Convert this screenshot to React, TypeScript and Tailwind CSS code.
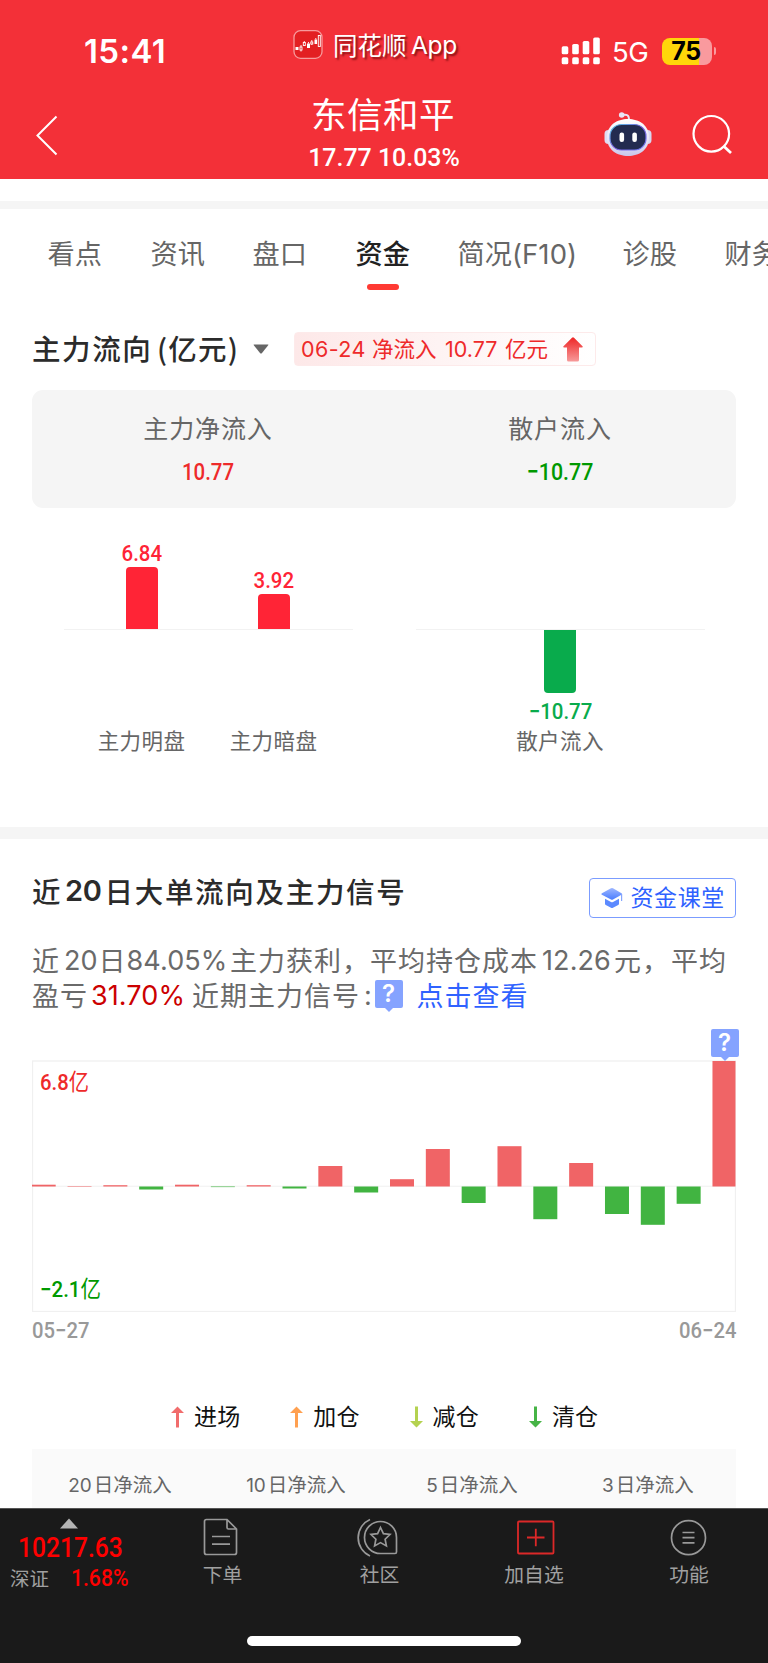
import React from "react";

const CJK = "font-['Noto_Sans_CJK_SC',sans-serif]";
const LATIN = "font-['Inter','Noto_Sans_CJK_SC',sans-serif]";
const DIN = "font-['Roboto','Noto_Sans_CJK_SC',sans-serif] font-medium";

const tabs = [
  { label: "看点", width: "w-[103px]" },
  { label: "资讯", width: "w-[102px]" },
  { label: "盘口", width: "w-[103px]" },
  { label: "资金", width: "w-[102px]", active: true },
  { label: "简况", suffix: "(F10)", width: "w-[165px]" },
  { label: "诊股", width: "w-[102px]" },
  { label: "财务", width: "w-[60px]" },
];

/* Signed bar heights in pixels, oldest day first. */
const dailyFlow = [
  1.8, 0.5, 1.3, -3, 1.8, -0.6, 1.3, -2, 20.5, -6, 7.3, 37.5, -16.5, 40.3, -32.7, 23.5, -27.5, -38.3, -17.3, 125.5,
];

const legend = [
  { label: "进场", color: "#f16c6c", up: true },
  { label: "加仓", color: "#ffa050", up: true },
  { label: "减仓", color: "#b4d250", up: false },
  { label: "清仓", color: "#46b446", up: false },
];

function StatusBar() {
  return (
    <div className="flex h-[84px] pl-[84px]">
      <div className={`${LATIN} mt-[35px] w-[209px] shrink-0 text-[33px] leading-[33px] font-semibold tracking-[0.4px]`}>15:41</div>
      <svg className="mt-[30px] h-[29px] w-[30px] shrink-0" viewBox="0 0 30 29">
        <rect x="1" y="0.7" width="28" height="27.6" rx="6.5" fill="#e31f22" stroke="#f79a9c" strokeWidth="1.3" />
        <g fill="#fff">
          <rect x="2.5" y="17" width="3" height="3" />
          <rect x="14" y="13.5" width="3" height="4.5" />
          <rect x="21.5" y="9.5" width="2.6" height="4.5" />
        </g>
        <g fill="none" stroke="#fff" strokeWidth="0.9">
          <rect x="7" y="17" width="2" height="3" />
          <path d="M8 15v2M8 20v1.5M11.3 11v1.5M15.5 12v1.5M18.8 10v2M18.8 15v-1M22.8 8v1.5" />
          <rect x="10.3" y="12.5" width="2" height="3" />
          <rect x="17.8" y="12" width="2" height="2" />
          <rect x="25.3" y="5.5" width="2" height="11" />
        </g>
      </svg>
      <div className="mt-[31.5px] ml-[10px] flex w-[228px] shrink-0 whitespace-nowrap text-[24.5px] leading-[26px] [text-shadow:2px_2px_2px_rgba(80,0,0,0.65)]">
        <span className={`${CJK} w-[78px]`}>同花顺</span>
        <span className={`${LATIN} tracking-[-0.3px]`}>App</span>
      </div>
      <svg className="mt-[37px] h-[28px] w-[40px] shrink-0" viewBox="0 0 40 28" fill="#fff">
        <rect x="0.7" y="9.3" width="6.6" height="8" rx="1.6" />
        <rect x="11.2" y="7" width="6.6" height="10.3" rx="1.6" />
        <rect x="21.7" y="4" width="6.6" height="13.3" rx="1.6" />
        <rect x="32.2" y="0.5" width="6.6" height="16.8" rx="1.6" />
        <rect x="0.7" y="20.3" width="6.6" height="7" rx="1.6" />
        <rect x="11.2" y="20.3" width="6.6" height="7" rx="1.6" />
        <rect x="21.7" y="20.3" width="6.6" height="7" rx="1.6" />
        <rect x="32.2" y="20.3" width="6.6" height="7" rx="1.6" />
      </svg>
      <div className={`${LATIN} mt-[38px] ml-[11px] w-[50px] shrink-0 text-[27.5px] leading-[28px] tracking-[-0.4px]`}>5G</div>
      <div className="mt-[37px] flex h-[28px] items-center">
        <div className="flex h-[27px] w-[50px] items-center overflow-hidden rounded-[8px] bg-[linear-gradient(90deg,#ffd60a_74%,#f99a9e_74%)]">
          <span className={`${LATIN} w-[48px] text-center text-[25px] leading-[27px] font-bold tracking-[-0.5px] text-black`}>75</span>
        </div>
        <div className="ml-[1.5px] h-[8px] w-[2.5px] rounded-r-full bg-[#f99a9e]" />
      </div>
    </div>
  );
}

function Robot() {
  return (
    <svg className="h-[46px] w-[50px]" viewBox="0 0 50 46">
      <defs>
        <linearGradient id="head" x1="0" y1="0" x2="0" y2="1">
          <stop offset="0" stopColor="#ffffff" />
          <stop offset="0.6" stopColor="#e6e2f6" />
          <stop offset="1" stopColor="#c9c6ea" />
        </linearGradient>
        <linearGradient id="visor" x1="0" y1="0" x2="1" y2="1">
          <stop offset="0" stopColor="#58d0e8" />
          <stop offset="0.5" stopColor="#7a5fe0" />
          <stop offset="1" stopColor="#6f7df0" />
        </linearGradient>
      </defs>
      <path d="M19 4c5-1 7 0 7 5" fill="none" stroke="#e8e4f4" strokeWidth="2" />
      <circle cx="18.7" cy="4" r="2.8" fill="#e9e4f5" />
      <rect x="1.500" y="19" width="8" height="14" rx="4" fill="#dfdcf2" />
      <rect x="40.500" y="19" width="8" height="14" rx="4" fill="#d9d7f0" />
      <path d="M25 8C36 8 46 14 46 26.500S36 45 25 45 4 39 4 26.500 14 8 25 8z" fill="url(#head)" />
      <rect x="7" y="13.500" width="36" height="25.500" rx="11.500" fill="#232b50" stroke="url(#visor)" strokeWidth="1.200" />
      <rect x="16.500" y="21.500" width="4.600" height="9.500" rx="2.200" fill="#fff" />
      <rect x="29.300" y="21.500" width="4.600" height="9.500" rx="2.200" fill="#fff" />
    </svg>
  );
}

function TitleBar() {
  return (
    <div className="flex h-[95px] pl-[36px]">
      <svg className="mt-[31px] h-[41px] w-[22px] shrink-0" viewBox="0 0 22 41" fill="none" stroke="#fff" strokeWidth="2">
        <path d="M20.500 1.500L1.500 20.500l19 19" />
      </svg>
      <div className="ml-[225px] w-[200px] text-center">
        <div className={`${CJK} mt-[10px] h-[38px] whitespace-nowrap text-[35.500px] leading-[38px] font-normal tracking-[0.500px]`}>东信和平</div>
        <div className={`${DIN} mt-[11px] ml-[2px] origin-center scale-x-[0.94] whitespace-nowrap text-[26.500px] leading-[28px]`}>17.77 10.03%</div>
      </div>
      <div className="mt-[27px] ml-[120px] flex w-[165px]">
        <Robot />
        <svg className="mt-[3px] ml-[39px] h-[41px] w-[41px]" viewBox="0 0 41 41" fill="none" stroke="#fff" strokeWidth="2.200">
          <circle cx="19.300" cy="19.800" r="17.800" />
          <path d="M31.500 32l7.500 7" strokeWidth="2.800" />
        </svg>
      </div>
    </div>
  );
}

function Tabs() {
  return (
    <nav className="flex h-[97px] shrink-0 overflow-hidden pt-[25px] pl-[47.500px]">
      {tabs.map((t) => (
        <div key={t.label} className={`${t.width} shrink-0 whitespace-nowrap`}>
          <div
            className={
              t.active
                ? `${CJK} h-[36px] text-[27.200px] leading-[36px] font-medium text-[#222]`
                : `${CJK} h-[36px] text-[27.200px] leading-[36px] font-normal text-[#666]`
            }
          >
            {t.label}
            {t.suffix && <span className={`${LATIN} text-[27.500px] tracking-[0.100px]`}>{t.suffix}</span>}
          </div>
          {t.active && <div className="mt-[13.500px] ml-[11px] h-[6.500px] w-[32px] rounded-full bg-[#ff3a33]" />}
        </div>
      ))}
    </nav>
  );
}

function FlowHeading() {
  return (
    <div className="flex h-[84px] shrink-0 items-center px-[32px]">
      <h2 className={`${CJK} flex h-[36px] w-[221px] whitespace-nowrap text-[28.500px] leading-[36px] font-medium tracking-[1.600px] text-[#2b2b2b]`}>
        <span className="w-[125px]">主力流向</span>
        <span className="tracking-[1.200px]">(亿元)</span>
      </h2>
      <svg className="mt-[2px] h-[10px] w-[16px]" viewBox="0 0 16 10" fill="#666">
        <path d="M1 .5h14q.8 0 .2.8L9 9q-1 1-2 0L.8 1.300Q.2.500 1 .5z" />
      </svg>
      <div className="mt-[2px] ml-[25px] flex h-[34px] w-[302px] items-center rounded-[4px] border border-[#fdeaea] bg-[linear-gradient(90deg,#fde8e8_0%,#fff_100%)] pl-[6px] text-[21.500px] leading-[24px] whitespace-nowrap text-[#ee2a2a]">
        <span className={`${LATIN} w-[71px] tracking-[0.400px]`}>06-24</span>
        <span className={`${CJK} relative top-[-1px] w-[73px]`}>净流入</span>
        <span className={`${LATIN} w-[60px]`}>10.77</span>
        <span className={`${CJK} relative top-[-1px] w-[58px]`}>亿元</span>
        <svg className="h-[25px] w-[20px]" viewBox="0 0 20 25">
          <defs>
            <linearGradient id="rise" x1="0" y1="0" x2="0" y2="1">
              <stop offset="0" stopColor="#ee2525" />
              <stop offset="1" stopColor="#f79a9a" />
            </linearGradient>
          </defs>
          <path d="M9 .7q1-.8 2 0l8.500 8.600q.7 1-.5 1.200H16V23q0 1.500-1.500 1.500h-9Q4 24.500 4 23V10.500H1Q-.2 10.300.5 9.300z" fill="url(#rise)" />
        </svg>
      </div>
    </div>
  );
}

function SummaryCard() {
  const label = `${CJK} mt-[20px] text-[25px] leading-[34px] font-normal tracking-[0.900px] text-[#666]`;
  return (
    <div className="mx-8 grid h-[118px] shrink-0 grid-cols-2 rounded-[11px] bg-[#f5f5f5] text-center whitespace-nowrap">
      <div>
        <div className={label}>主力净流入</div>
        <div className={`${DIN} mt-[14px] scale-x-[0.84] text-[24.300px] leading-[28px] text-[#ee2a2a]`}>10.77</div>
      </div>
      <div>
        <div className={label}>散户流入</div>
        <div className={`${DIN} mt-[14px] scale-x-[0.88] text-[24.300px] leading-[28px] text-[#009900]`}>−10.77</div>
      </div>
    </div>
  );
}

function SplitBars() {
  const label = `${CJK} text-[21.500px] leading-[30px] font-normal tracking-[0.400px] text-[#666]`;
  const value = `${DIN} scale-x-[0.93] text-[22px] leading-[22px]`;
  return (
    <div className="flex h-[319px] shrink-0 justify-between px-[63.500px] text-center whitespace-nowrap">
      <div className="w-[289px]">
        <div className="flex h-[122px] items-end justify-center gap-[32px] border-b-[1.500px] border-[#f2f2f2]">
          <div className="flex w-[100px] flex-col items-center text-[#ff2436]">
            <span className={value}>6.84</span>
            <div className="mt-[2px] h-[62.500px] w-[32px] rounded-t-[4px] bg-[#ff2436]" />
          </div>
          <div className="flex w-[100px] flex-col items-center text-[#ff2436]">
            <span className={value}>3.92</span>
            <div className="mt-[2px] h-[35.500px] w-[32px] rounded-t-[4px] bg-[#ff2436]" />
          </div>
        </div>
        <div className="mt-[95px] flex justify-center gap-[32px]">
          <span className={`${label} w-[99px]`}>主力明盘</span>
          <span className={`${label} w-[101px]`}>主力暗盘</span>
        </div>
      </div>
      <div className="w-[289px]">
        <div className="h-[122px] border-b-[1.500px] border-[#f2f2f2]" />
        <div className="mx-auto h-[63px] w-[32px] rounded-b-[4px] bg-[#09ab4c]" />
        <div className={`${value} mt-[8px] text-[#09ab4c]`}>−10.77</div>
        <div className={`${label} mt-[2px]`}>散户流入</div>
      </div>
    </div>
  );
}

function QuestionMark() {
  return (
    <div className="h-[31px] w-[28px]">
      <div className={`${LATIN} flex h-[28px] items-center justify-center rounded-[2px] bg-[#85a3ff] text-[24px] leading-[28px] font-semibold text-white`}>?</div>
      <svg className="mx-auto h-[4px] w-[8px]" viewBox="0 0 8 4" fill="#85a3ff">
        <path d="M0 0h8L4 4z" />
      </svg>
    </div>
  );
}

function SignalHeading() {
  return (
    <div className="flex h-[79px] shrink-0 items-start justify-between px-8">
      <h2 className={`${CJK} mt-[34px] flex whitespace-nowrap text-[28.500px] leading-[36px] font-medium tracking-[1.700px] text-[#2b2b2b]`}>
        <span className="w-[33px]">近</span>
        <span className={`${LATIN} w-[39.500px] text-[29px] font-semibold tracking-[-0.200px]`}>20</span>
        <span>日大单流向及主力信号</span>
      </h2>
      <div className="mt-[38.500px] flex h-[40px] w-[147.500px] items-center rounded-[4px] border-[1.500px] border-[#7b9cff] pl-[11px]">
        <svg className="h-[22px] w-[22px]" viewBox="0 0 22 22">
          <defs>
            <linearGradient id="cap" x1="0" y1="0" x2="0" y2="1">
              <stop offset="0" stopColor="#9db6ff" />
              <stop offset="1" stopColor="#4a7dff" />
            </linearGradient>
          </defs>
          <path d="M10 1.300q1-.5 2 0l8.500 4.900q1.100.8 0 1.600L12 12.500q-1 .5-2 0L.9 7.800q-1-.8 0-1.600z" fill="url(#cap)" />
          <path d="M4 11.700l6 3.200q1 .5 2 0l6-3.200v5q0 .8-.8 1.300L12 20.700q-1 .5-2 0L4.800 18q-.8-.5-.8-1.300z" fill="#5c8aff" />
          <path d="M20.600 7v7" stroke="#86a6ff" strokeWidth="1.200" />
        </svg>
        <span className={`${CJK} mt-[-3px] ml-[8px] text-[23px] leading-[30px] whitespace-nowrap tracking-[0.600px] text-[#2f62ff]`}>资金课堂</span>
      </div>
    </div>
  );
}

function Summary() {
  const cn = `${CJK} mt-[-2px] text-[27px] font-normal tracking-[1px]`;
  const num = `${LATIN} text-[27px] tracking-[0.100px]`;
  return (
    <div className="h-[142px] shrink-0 pt-[25px] pl-8 whitespace-nowrap text-[#6a6a6a]">
      <div className="flex h-[35px] items-center leading-[35px]">
        <span className={`${cn} w-[32px]`}>近</span>
        <span className={`${num} w-[34.500px]`}>20</span>
        <span className={`${cn} w-[28px]`}>日</span>
        <span className={`${num} w-[103.500px]`}>84.05%</span>
        <span className={`${cn} w-[140px]`}>主力获利，</span>
        <span className={`${cn} w-[172px]`}>平均持仓成本</span>
        <span className={`${num} w-[72px]`}>12.26</span>
        <span className={`${cn} w-[57px]`}>元，</span>
        <span className={cn}>平均</span>
      </div>
      <div className="flex h-[35px] items-center leading-[35px]">
        <span className={`${cn} w-[59px]`}>盈亏</span>
        <span className={`${num} w-[101px] text-[#cc0000]`}>31.70%</span>
        <span className={`${cn} w-[172px]`}>近期主力信号</span>
        <span className={`${num} w-[10.500px]`}>:</span>
        <QuestionMark />
        <span className={`${CJK} mt-[-2px] ml-[14px] text-[27px] tracking-[1px] text-[#2f62ff]`}>点击查看</span>
      </div>
    </div>
  );
}

function FlowChart() {
  return (
    <div className="shrink-0 px-8">
      <div className="relative h-[252px]">
        <svg className="block h-[252px] w-[704px]" viewBox="0 0 704 252">
          <rect x="0.500" y="1" width="703" height="250.500" fill="none" stroke="#f0f0f0" strokeWidth="1.300" />
          <path d="M0 126.200H704" stroke="#f0f0f0" strokeWidth="1" />
          {dailyFlow.map((v, i) => (
            <rect
              key={i}
              x={i * 35.83 - 0.3}
              y={v > 0 ? 126.5 - v : 126.5}
              width={i === 19 ? 23 : 24}
              height={Math.abs(v)}
              fill={v > 0 ? "#f06466" : "#41b441"}
            />
          ))}
        </svg>
        <div className={`${DIN} absolute top-[9px] left-[8px] origin-left scale-x-[0.900] text-[22.500px] leading-[26px] whitespace-nowrap text-[#ee2a2a]`}>
          6.8<span className="font-normal">亿</span>
        </div>
        <div className={`${DIN} absolute top-[216px] left-[8px] origin-left scale-x-[0.910] text-[22.500px] leading-[26px] whitespace-nowrap text-[#009900]`}>
          −2.1<span className="font-normal">亿</span>
        </div>
        <div className="absolute top-[-31px] left-[678.500px]">
          <QuestionMark />
        </div>
      </div>
      <div className={`${DIN} flex h-[36px] justify-between text-[22px] leading-[38px] text-[#999]`}>
        <span className="origin-left scale-x-[0.920]">05−27</span>
        <span className="origin-right scale-x-[0.920]">06−24</span>
      </div>
    </div>
  );
}

function Legend() {
  return (
    <div className="flex h-[101px] shrink-0 pt-[56px] pl-[171px]">
      {legend.map((l) => (
        <div key={l.label} className="flex w-[119.300px] items-start">
          <svg className={l.up ? "mt-[2px] h-[22px] w-[13px]" : "mt-[2px] h-[22px] w-[13px] rotate-180"} viewBox="0 0 13 22">
            <path d="M6.500 0.500L13 7H8v14.500H5V7H0z" fill={l.color} />
          </svg>
          <span className={`${CJK} mt-[-4px] ml-[10px] text-[23px] leading-[30px] whitespace-nowrap tracking-[0.200px] text-[#111]`}>{l.label}</span>
        </div>
      ))}
    </div>
  );
}

function PeriodHeader() {
  return (
    <div className="mx-8 grid h-[59px] shrink-0 grid-cols-4 bg-[#fafafa] pt-[20px] text-center text-[19.500px] leading-[30px] whitespace-nowrap text-[#666]">
      {["20", "10", "5", "3"].map((d) => (
        <div key={d}>
          <span className={`${LATIN} mr-[2px] text-[19px]`}>{d}</span>
          <span className={`${CJK} font-normal`}>日净流入</span>
        </div>
      ))}
    </div>
  );
}

function BottomBar() {
  const label = `${CJK} mt-[2px] text-[19.800px] leading-[28px] font-normal text-[#a0a0a0] whitespace-nowrap`;
  const item = "flex flex-col items-center";
  return (
    <div className="flex h-[155px] shrink-0 flex-col border-t border-[#555] bg-[#1a1a1a]">
      <div className="flex h-[127px] pt-[9px]">
        <div className="w-[144px]">
          <svg className="ml-[60px] h-[11px] w-[18px]" viewBox="0 0 18 11" fill="#b4b4b4">
            <path d="M9 .5L18 10.500H0z" />
          </svg>
          <div className={`${DIN} mt-[3px] ml-[18px] origin-left scale-x-[0.880] text-[28px] leading-[32px] text-[#ff0000]`}>10217.63</div>
          <div className="flex h-[30px] whitespace-nowrap">
            <span className={`${CJK} w-[62px] pl-[10px] text-[19.500px] leading-[28px] font-normal text-[#a0a0a0]`}>深证</span>
            <span className={`${DIN} ml-[9px] origin-left scale-x-[0.880] text-[24px] leading-[28px] text-[#ff0000]`}>1.68%</span>
          </div>
        </div>
        <div className={`${item} w-[157px]`}>
          <svg className="mt-[-0.500px] mr-[4px] mb-[0.500px] h-[40px] w-[36px]" viewBox="0 0 36 40" fill="none" stroke="#999" strokeWidth="1.700">
            <path d="M3.500 1.500H24l9.500 9.500V34.500q0 2-2 2h-28q-2 0-2-2V3.500q0-2 2-2zM24 1.500v8q0 1.500 1.500 1.500h8" />
            <path d="M9 18.500h18M9 26.200h18" />
          </svg>
          <span className={label}>下单</span>
        </div>
        <div className={`${item} w-[157px]`}>
          <svg className="mr-[5px] h-[40px] w-[42px]" viewBox="0 0 42 40" fill="none" stroke="#999" strokeWidth="1.700">
            <path d="M14 1.500A20 20 0 0 0 14 38" />
            <path d="M24.500 3.500A16 16 0 0 0 24.500 35.500H39q1.500 0 1.500-1.500V19.500A16 16 0 0 0 24.500 3.500z" />
            <path d="M24.500 9.500l2.900 6.200 6.600.8-4.900 4.700 1.300 6.700-5.900-3.300-5.900 3.300 1.300-6.700-4.900-4.700 6.600-.8z" />
          </svg>
          <span className={label}>社区</span>
        </div>
        <div className={`${item} w-[152px]`}>
          <svg className="ml-[3px] h-[40px] w-[38px]" viewBox="0 0 38 40" fill="none" stroke="#dc2828" strokeWidth="1.800">
            <rect x="1" y="3.500" width="35.500" height="32" rx="1" />
            <path d="M10 19.500h17.500M18.800 10.800v17.500" />
          </svg>
          <span className={label}>加自选</span>
        </div>
        <div className={`${item} w-[158px]`}>
          <svg className="h-[40px] w-[38px]" viewBox="0 0 38 40" fill="none" stroke="#999" strokeWidth="1.700">
            <circle cx="18.500" cy="19.700" r="17" />
            <path d="M12.500 14.500h12M12.500 19.700h12M12.500 24.900h12" />
          </svg>
          <span className={label}>功能</span>
        </div>
      </div>
      <div className="mx-auto h-[10px] w-[274px] rounded-full bg-white" />
    </div>
  );
}

export default function App() {
  return (
    <div className="flex h-[1663px] w-[768px] flex-col overflow-hidden bg-white">
      <header className="h-[179px] shrink-0 bg-[#f33038] text-white">
        <StatusBar />
        <TitleBar />
      </header>
      <div className="mt-[22px] h-[8px] shrink-0 bg-[#f5f5f5]" />
      <Tabs />
      <FlowHeading />
      <SummaryCard />
      <SplitBars />
      <div className="h-[12px] shrink-0 bg-[#f5f5f5]" />
      <SignalHeading />
      <Summary />
      <FlowChart />
      <Legend />
      <PeriodHeader />
      <BottomBar />
    </div>
  );
}
